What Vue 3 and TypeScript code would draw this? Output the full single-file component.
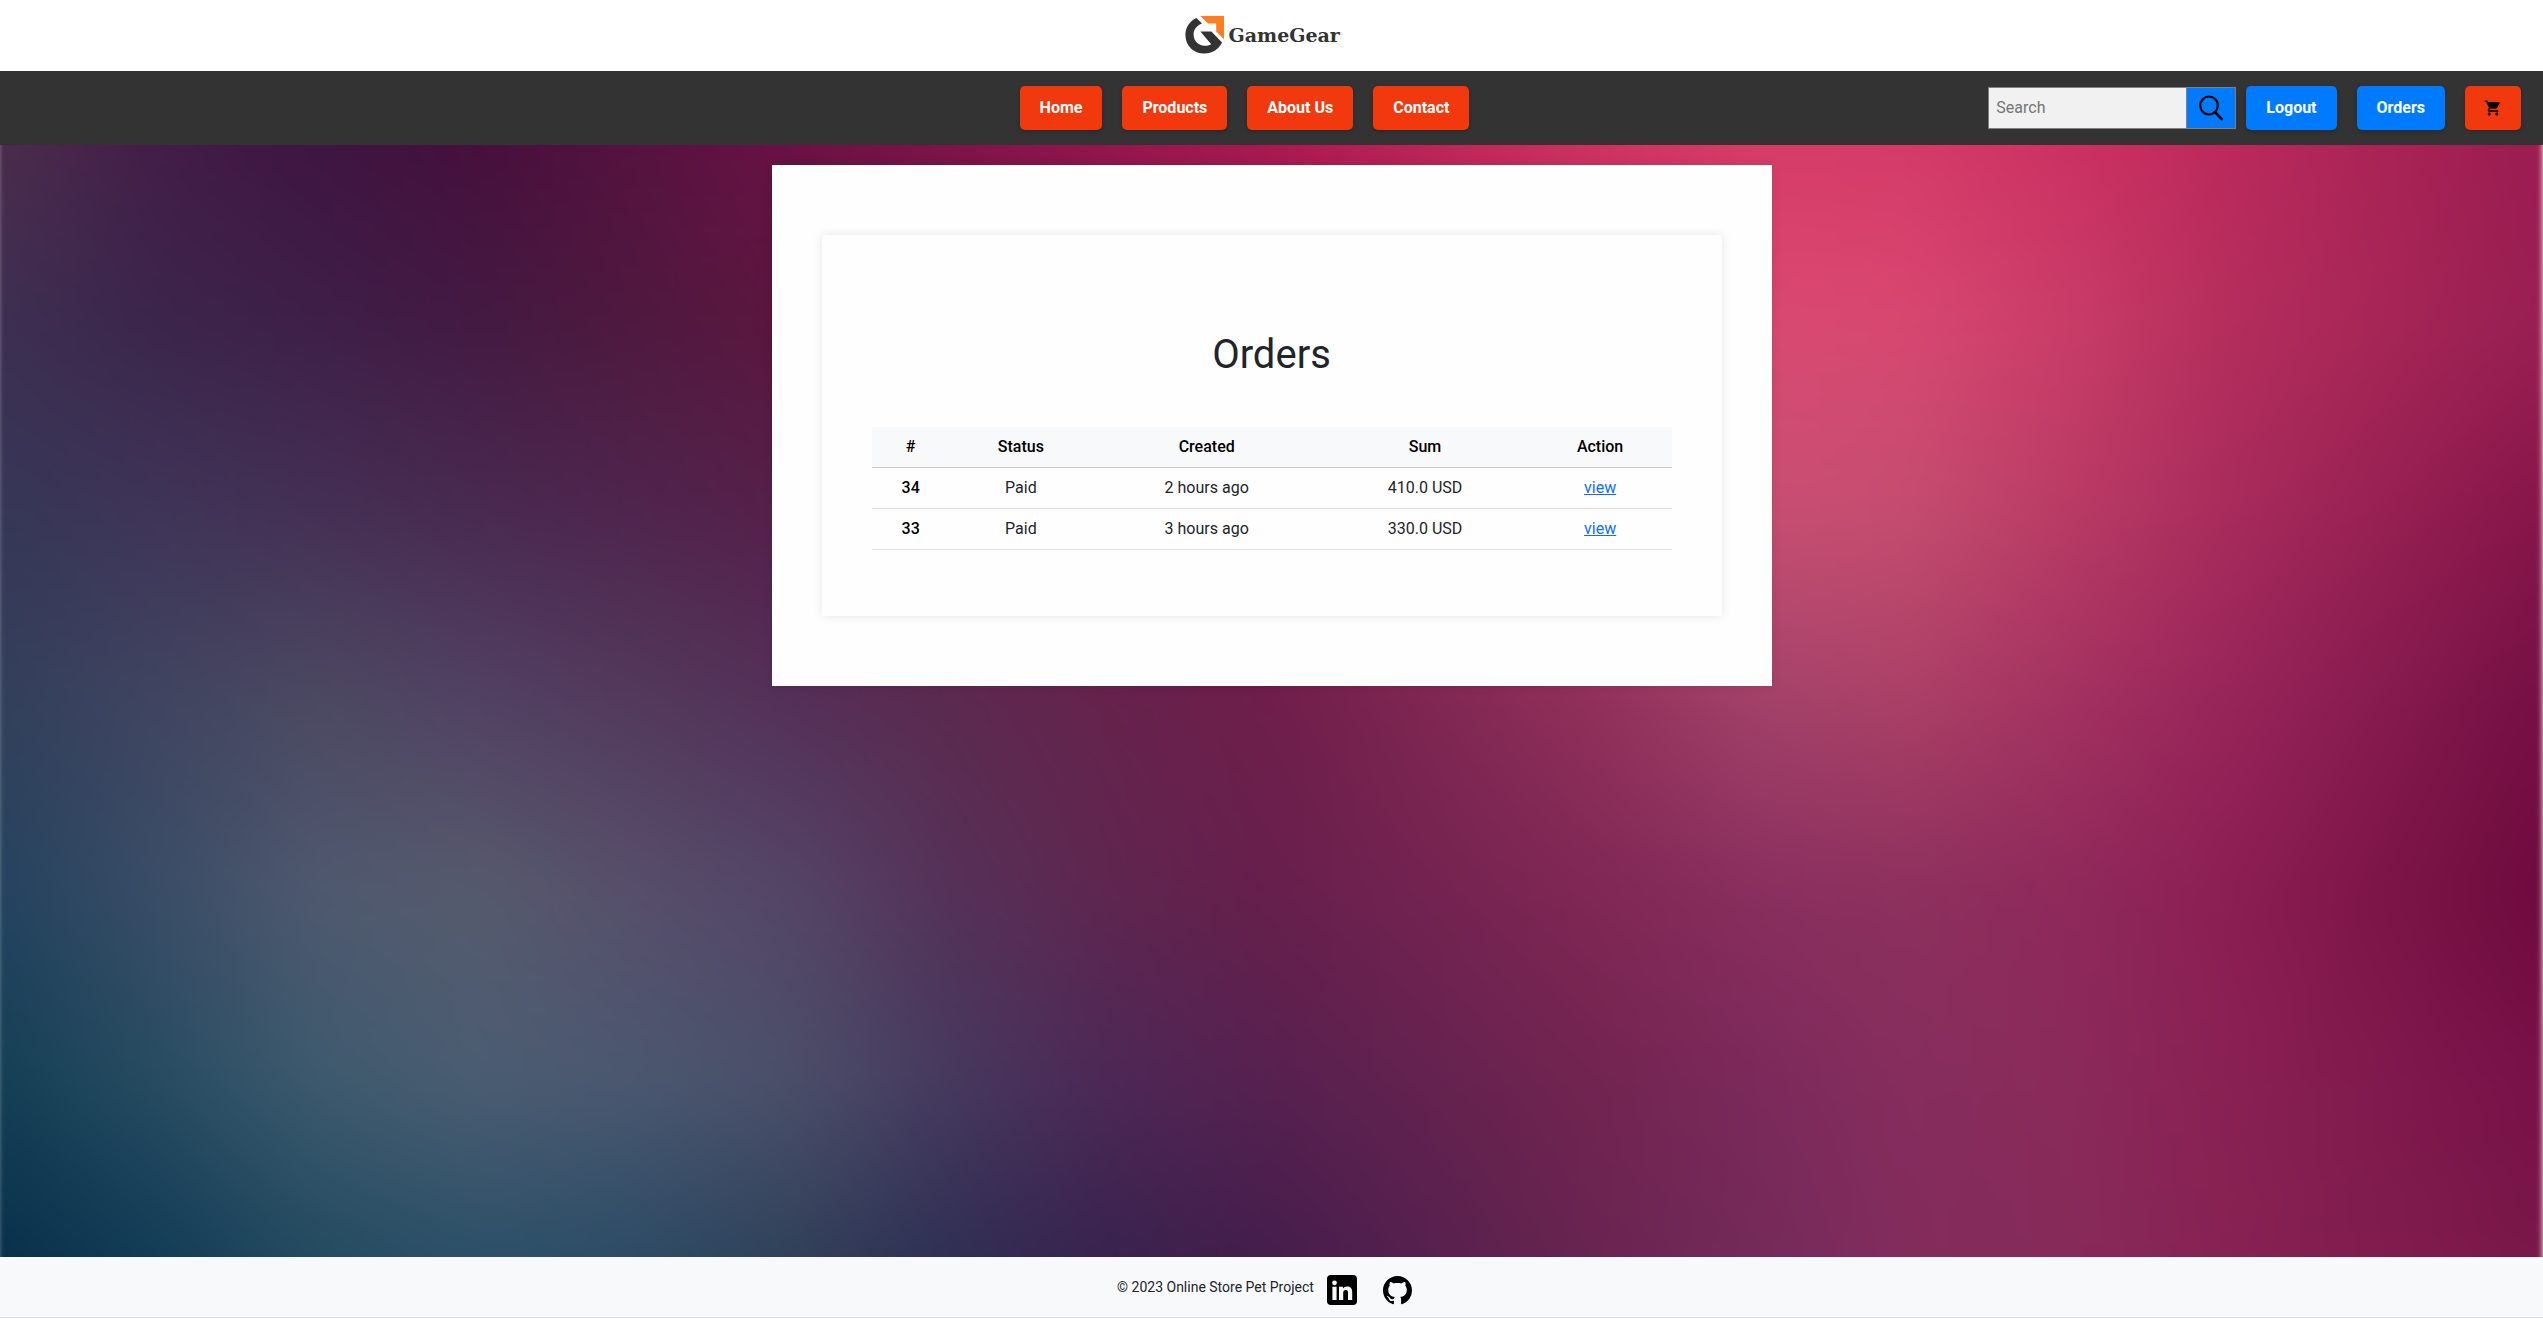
<script setup lang="ts">
import { ref } from 'vue'

interface Order {
  id: number
  status: string
  created: string
  sum: string
}

const menu: string[] = ['Home', 'Products', 'About Us', 'Contact']
const columns: string[] = ['#', 'Status', 'Created', 'Sum', 'Action']
const orders: Order[] = [
  { id: 34, status: 'Paid', created: '2 hours ago', sum: '410.0 USD' },
  { id: 33, status: 'Paid', created: '3 hours ago', sum: '330.0 USD' },
]
const query = ref('')

// Colour mesh of the page backdrop: each row runs left to right, rows run top to bottom.
const stops: number[] = [0, 6.25, 12.5, 18.75, 25, 31.25, 37.5, 43.75, 50, 62.5, 69.6, 75, 81.8, 87.5, 100]
const mesh: string[][] = [
  ['#4c2d4c', '#431d48', '#3e1541', '#460f3c', '#561240', '#6b1244', '#801448', '#96164d', '#ab1951', '#cd3160', '#d83b68', '#d53a68', '#cb3062', '#bb2a5c', '#9a1c50'],
  ['#3d3052', '#3c254b', '#3e1f48', '#431a42', '#4f193f', '#5c173f', '#66153f', '#7a1a46', '#901c4a', '#c83a66', '#d94a72', '#d84871', '#c83c68', '#b52e5c', '#981f52'],
  ['#363757', '#3f3558', '#453055', '#492a50', '#4f254e', '#56204a', '#601e4a', '#6c1d4a', '#7a1d4a', '#a83a60', '#c84f73', '#c44d70', '#b83a64', '#a82c5c', '#861549'],
  ['#32405b', '#404561', '#4c4a62', '#524263', '#533a5c', '#543058', '#5c2a50', '#66234c', '#6f1e4b', '#90305a', '#a3436a', '#ab4066', '#a23160', '#98255a', '#741044'],
  ['#24435f', '#3a4d67', '#4f596f', '#565b6e', '#574f6b', '#544566', '#553158', '#5f2650', '#671f4c', '#802755', '#8a2f5f', '#8d315e', '#8f295b', '#8c1e53', '#6d0b3d'],
  ['#143f55', '#274c62', '#3d5a6e', '#4b5d72', '#4b5870', '#4b4f6a', '#46395e', '#4d2856', '#572150', '#722450', '#7c2a5b', '#862e5e', '#8a2a5a', '#8a2153', '#771148'],
  ['#082f4a', '#113b55', '#224a60', '#2a5068', '#2b4b66', '#2f4058', '#2e2e54', '#38224e', '#431d4c', '#682450', '#742b5a', '#822c5c', '#862a5a', '#862353', '#791848'],
]
// The mesh overhangs the backdrop by this much, so that its softening never shows an edge.
const bleed = 80
const toGradient = (row: string[]): string =>
  `linear-gradient(90deg, ${row
    .map((c, i) => `${c} calc(${bleed}px + (100% - ${bleed * 2}px) * ${stops[i] / 100})`)
    .join(', ')})`
const bands = mesh.slice(0, -1).map((row, i) => ({
  upper: toGradient(row),
  lower: toGradient(mesh[i + 1]),
}))
const topCap = toGradient(mesh[0])
const bottomCap = toGradient(mesh[mesh.length - 1])
</script>

<template>
  <div class="page">
    <header class="header">
      <a href="#" class="logo">
        <svg class="logo-mark" viewBox="0 0 40 38" aria-hidden="true">
          <path
            d="M11.5 2 L17 7.6 C12 9.4 8.6 13.4 8.6 18.6 C8.6 25 13.2 29.8 19.6 29.8 C22.2 29.8 24.4 29.2 26.2 28.2 L15.4 15.4 H26.4 L37 26.6 C33.4 33.6 27.4 37.6 19.4 37.6 C8.4 37.6 .4 29.6 .4 19 C.4 11.4 4.8 5 11.5 2 Z"
            fill="#333"
          />
          <path d="M15.4 0 H39 V23.2 L31.2 15.6 V7.6 H23 Z" fill="#fd7e20" />
        </svg>
        <span class="logo-text">GameGear</span>
      </a>
    </header>

    <nav class="nav">
      <ul class="menu">
        <li v-for="item in menu" :key="item">
          <a href="#" class="btn btn-red">{{ item }}</a>
        </li>
      </ul>
      <div class="tools">
        <form class="search" role="search" @submit.prevent>
          <input v-model="query" type="text" placeholder="Search" aria-label="Search" />
          <button type="submit" aria-label="Submit search">
            <svg viewBox="0 0 24 26" width="24" height="26" aria-hidden="true">
              <ellipse cx="10" cy="10.5" rx="8.8" ry="9" fill="none" stroke="#000" stroke-width="2.2" />
              <path d="M16 17.2 L22.6 24" stroke="#000" stroke-width="2.6" stroke-linecap="round" />
            </svg>
          </button>
        </form>
        <div class="account">
          <a href="#" class="btn btn-blue">Logout</a>
          <a href="#" class="btn btn-blue">Orders</a>
          <a href="#" class="btn btn-red btn-cart" aria-label="Cart">
            <svg viewBox="0 0 24 24" width="18" height="18" aria-hidden="true">
              <path
                d="M7 18c-1.1 0-1.99.9-1.99 2S5.9 22 7 22s2-.9 2-2-.9-2-2-2zM1 2v2h2l3.6 7.59-1.35 2.45c-.16.28-.25.61-.25.96 0 1.1.9 2 2 2h12v-2H7.42c-.14 0-.25-.11-.25-.25l.03-.12.9-1.63h7.45c.75 0 1.41-.41 1.75-1.03l3.58-6.49c.08-.14.12-.31.12-.48 0-.55-.45-1-1-1H5.21l-.94-2H1zm16 16c-1.1 0-1.99.9-1.99 2s.89 2 1.99 2 2-.9 2-2-.9-2-2-2z"
              />
            </svg>
          </a>
        </div>
      </div>
    </nav>

    <main class="main">
      <div class="backdrop" aria-hidden="true">
        <div class="mesh" :style="{ inset: `-${bleed}px` }">
          <div :style="{ height: `${bleed}px`, backgroundImage: topCap }"></div>
          <div v-for="(band, i) in bands" :key="i" class="band" :style="{ backgroundImage: band.upper }">
            <div class="band-fade" :style="{ backgroundImage: band.lower }"></div>
          </div>
          <div :style="{ height: `${bleed}px`, backgroundImage: bottomCap }"></div>
        </div>
      </div>

      <section class="panel">
        <div class="card">
          <h1>Orders</h1>
          <table>
            <thead>
              <tr>
                <th v-for="col in columns" :key="col" scope="col">{{ col }}</th>
              </tr>
            </thead>
            <tbody>
              <tr v-for="order in orders" :key="order.id">
                <th scope="row">{{ order.id }}</th>
                <td>{{ order.status }}</td>
                <td>{{ order.created }}</td>
                <td>{{ order.sum }}</td>
                <td><a href="#">view</a></td>
              </tr>
            </tbody>
          </table>
        </div>
      </section>
    </main>

    <footer class="footer">
      <span>© 2023 Online Store Pet Project</span>
      <a href="#" class="social" aria-label="LinkedIn">
        <svg viewBox="0 0 30 30" width="30" height="30" aria-hidden="true">
          <rect width="30" height="30" rx="4" />
          <circle cx="7.5" cy="7.8" r="2.4" fill="#f8f9fa" />
          <path
            d="M5.4 11.8 H9.6 V25 H5.4 Z M12 11.8 H16 V13.6 C16.8 12.3 18.2 11.4 20.2 11.4 C24 11.4 25.2 13.8 25.2 17.4 V25 H21 V18.2 C21 16.2 20.6 15 18.8 15 C17 15 16.2 16.2 16.2 18.2 V25 H12 Z"
            fill="#f8f9fa"
          />
        </svg>
      </a>
      <a href="#" class="social" aria-label="GitHub">
        <svg viewBox="0 0 16 16" width="29" height="29" aria-hidden="true">
          <path
            d="M8 0C3.58 0 0 3.58 0 8c0 3.54 2.29 6.53 5.47 7.59.4.07.55-.17.55-.38 0-.19-.01-.82-.01-1.49-2.01.37-2.53-.49-2.69-.94-.09-.23-.48-.94-.82-1.13-.28-.15-.68-.52-.01-.53.63-.01 1.08.58 1.23.82.72 1.21 1.87.87 2.33.66.07-.52.28-.87.51-1.07-1.78-.2-3.64-.89-3.64-3.95 0-.87.31-1.59.82-2.15-.08-.2-.36-1.02.08-2.12 0 0 .67-.21 2.2.82.64-.18 1.32-.27 2-.27s1.36.09 2 .27c1.53-1.04 2.2-.82 2.2-.82.44 1.1.16 1.92.08 2.12.51.56.82 1.27.82 2.15 0 3.07-1.87 3.75-3.65 3.95.29.25.54.73.54 1.48 0 1.07-.01 1.93-.01 2.2 0 .21.15.46.55.38A8.01 8.01 0 0 0 16 8c0-4.42-3.58-8-8-8z"
          />
        </svg>
      </a>
    </footer>
  </div>
</template>

<style>
body {
  margin: 0;
  background: #fff;
}
</style>

<style scoped>
* {
  box-sizing: border-box;
}

.page {
  display: flex;
  flex-direction: column;
  min-height: 100vh;
  font-family: Roboto, sans-serif;
  font-size: 16px;
  line-height: 24px;
  color: #212529;
}

.header {
  display: flex;
  justify-content: center;
  height: 71px;
}

.logo {
  display: flex;
  gap: 4px;
  width: 200px;
  padding: 16px 0 0 13px;
  color: #333;
  text-decoration: none;
}

.logo-mark {
  flex: none;
  width: 40px;
  height: 38px;
}

.logo-text {
  padding-top: 7px;
  font-family: 'DejaVu Serif', serif;
  font-size: 19px;
  font-weight: 700;
  line-height: 24px;
}

.nav {
  display: grid;
  grid-template-columns: 1fr auto 1fr;
  align-items: center;
  padding: 15px 22px 15px 0;
  background: #333;
}

.menu {
  grid-column: 2;
  display: flex;
  gap: 20px;
  margin: 0 32px 0 0;
  padding: 0;
  list-style: none;
}

.btn {
  display: block;
  padding: 10px 20px;
  border-radius: 5px;
  box-shadow: 0 2px 4px rgba(0, 0, 0, 0.2);
  color: #fff;
  font-weight: 700;
  text-decoration: none;
}

.btn-red {
  background: #f2380d;
}

.btn-blue {
  background: #007bff;
}

.btn-cart {
  display: flex;
  justify-content: center;
  align-items: center;
  width: 56px;
  height: 44px;
}

.btn-cart svg {
  flex: none;
}

.tools {
  display: flex;
  justify-content: flex-end;
  align-items: center;
  gap: 10px;
}

.search {
  display: flex;
  height: 42px;
  border: 1px solid #808080;
}

.search input {
  width: 197px;
  padding: 0 7px;
  border: 0;
  border-radius: 0;
  background: #f1f1f1;
  color: #333;
  font: inherit;
}

.search input::placeholder {
  color: #757575;
}

.search button {
  display: flex;
  justify-content: center;
  align-items: center;
  width: 49px;
  padding: 0;
  border: 0;
  border-left: 1px solid #808080;
  background: #007bff;
}

.account {
  display: flex;
  gap: 20px;
}

.main {
  position: relative;
  flex: 1;
  overflow: hidden;
  padding: 20px 0;
}

.backdrop {
  position: absolute;
  inset: -12px 0 -12px -3px;
  overflow: hidden;
  filter: blur(3px);
}

.mesh {
  position: absolute;
  display: flex;
  flex-direction: column;
  filter: blur(24px);
}

.band {
  flex: 1;
}

.band-fade {
  height: 100%;
  mask-image: linear-gradient(transparent, #000);
}

.panel {
  position: relative;
  max-width: 1000px;
  margin: 0 auto;
  padding: 70px 50px;
  background: #fefefe;
  box-shadow: 0 0 10px rgba(0, 0, 0, 0.1);
}

.card {
  padding: 96px 50px 66px;
  background: #fefefe;
  box-shadow: 0 0 10px rgba(0, 0, 0, 0.1);
}

h1 {
  margin: 0 0 48px;
  font-size: 40px;
  font-weight: 400;
  line-height: 48px;
  text-align: center;
}

table {
  width: 100%;
  border-collapse: collapse;
  text-align: center;
}

th,
td {
  padding: 8px;
  border-bottom: 1px solid #dee2e6;
}

th {
  color: #000;
  font-weight: 500;
}

thead th {
  border-bottom-color: #c6c7c8;
  background: #f8f9fa;
}

td a {
  color: #0d6efd;
}

.footer {
  display: flex;
  justify-content: center;
  align-items: center;
  height: 61px;
  border-bottom: 1px solid #dee2e6;
  background: #f8f9fa;
  font-size: 14px;
}

.social {
  display: flex;
  justify-content: center;
  width: 30px;
  margin: 6px 13px 0;
}
</style>
